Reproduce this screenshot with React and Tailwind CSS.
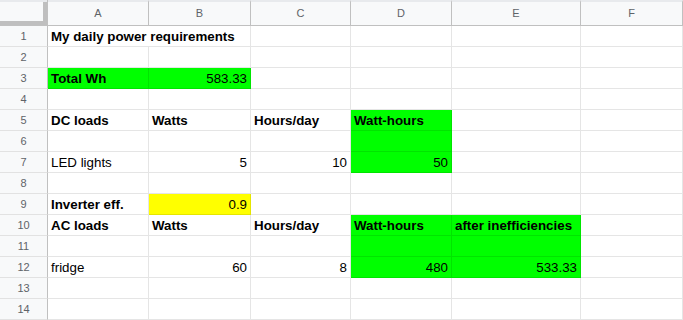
import React from "react";

const cols = ["A", "B", "C", "D", "E", "F"];
const green = "bg-[#00ff00]";
const yellow = "bg-[#ffff00]";

// row number -> cells by column letter
const data = {
    1: { A: { v: "My daily power requirements", b: true, span: 2 } },
    3: { A: { v: "Total Wh", b: true, bg: green }, B: { v: "583.33", r: true, bg: green } },
    5: {
        A: { v: "DC loads", b: true },
        B: { v: "Watts", b: true },
        C: { v: "Hours/day", b: true },
        D: { v: "Watt-hours", b: true, bg: green },
    },
    6: { D: { v: "", bg: green } },
    7: {
        A: { v: "LED lights" },
        B: { v: "5", r: true },
        C: { v: "10", r: true },
        D: { v: "50", r: true, bg: green },
    },
    9: { A: { v: "Inverter eff.", b: true }, B: { v: "0.9", r: true, bg: yellow } },
    10: {
        A: { v: "AC loads", b: true },
        B: { v: "Watts", b: true },
        C: { v: "Hours/day", b: true },
        D: { v: "Watt-hours", b: true, bg: green },
        E: { v: "after inefficiencies", b: true, bg: green },
    },
    11: { D: { v: "", bg: green }, E: { v: "", bg: green } },
    12: {
        A: { v: "fridge" },
        B: { v: "60", r: true },
        C: { v: "8", r: true },
        D: { v: "480", r: true, bg: green },
        E: { v: "533.33", r: true, bg: green },
    },
};

const Cell = ({ cell }) => (
    <div
        className={`h-[21px] border-r border-b border-black/10 flex items-end pb-[1px] px-[3px] text-[13.33px] leading-[16px] text-black whitespace-nowrap overflow-hidden ${
            cell?.span === 2 ? "col-span-2" : ""
        } ${cell?.r ? "justify-end" : ""} ${cell?.b ? "font-bold" : ""} ${cell?.bg || ""}`}
    >
        {cell?.v}
    </div>
);

const App = () => {
    const rows = Array.from({ length: 14 }, (_, i) => i + 1);

    return (
        <div
            className="w-[683px] h-[320px] overflow-hidden bg-white"
            style={{ fontFamily: '"Liberation Sans", Arial, sans-serif' }}
        >
            <div className="grid grid-cols-[48px_101px_102px_100px_101px_129px_102px]">
                {/* corner */}
                <div className="h-[26px] bg-[#e8eaed] pt-[2px] border-b border-r border-[#c0c0c0]">
                    <div className="h-[23px] bg-[#f8f9fa] border-r-4 border-b-4 border-[#bfbfbf]" />
                </div>
                {cols.map((c) => (
                    <div
                        key={c}
                        className="h-[26px] border-t-2 border-t-[#e8eaed] bg-[#f8f9fa] border-r border-b border-[#c0c0c0] flex items-center justify-center text-[11px] text-[#5f6368]"
                    >
                        {c}
                    </div>
                ))}

                {rows.map((r) => {
                    const rowData = data[r] || {};
                    const cells = [];
                    let skip = 0;
                    cols.forEach((c) => {
                        if (skip > 0) {
                            skip--;
                            return;
                        }
                        const cell = rowData[c];
                        if (cell?.span) skip = cell.span - 1;
                        cells.push(<Cell key={c} cell={cell} />);
                    });
                    return (
                        <React.Fragment key={r}>
                            <div className="h-[21px] bg-[#f8f9fa] border-r border-[#c0c0c0] border-b border-b-[#e2e2e2] flex items-center justify-center text-[11px] text-[#5f6368]">
                                {r}
                            </div>
                            {cells}
                        </React.Fragment>
                    );
                })}
            </div>
        </div>
    );
};

export default App;
